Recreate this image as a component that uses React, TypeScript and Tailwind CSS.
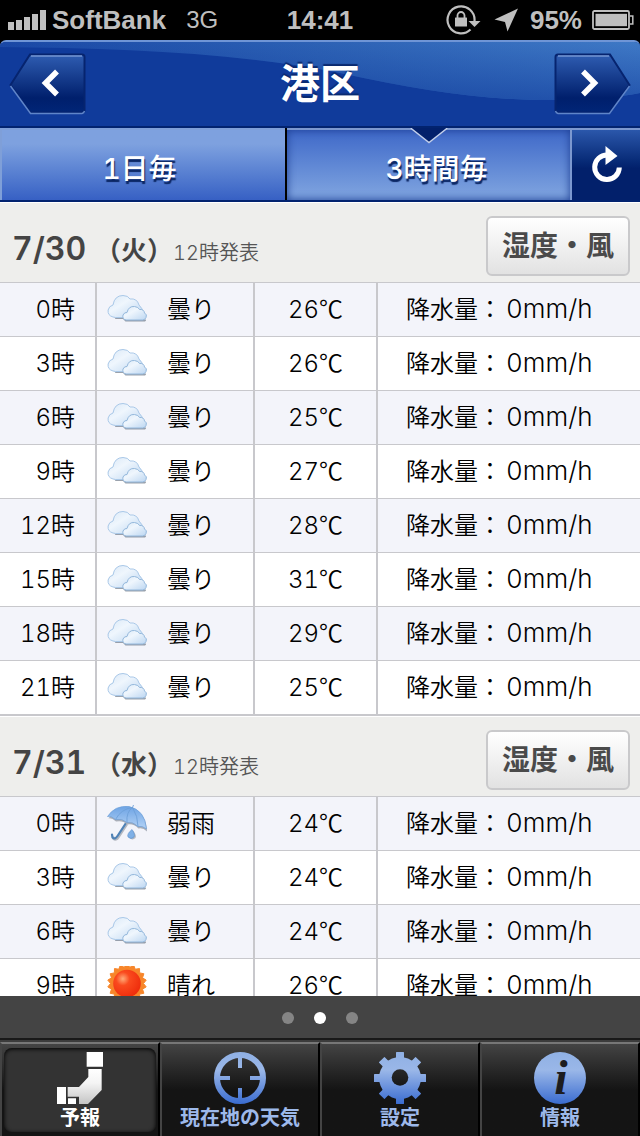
import React, { useState } from 'react';

type Weather = 'cloudy' | 'rain' | 'sunny';

interface Forecast {
  hour: number;
  weather: Weather;
  temp: number;
  rain: number;
}

interface Day {
  date: string;
  weekday: string;
  announced: string;
  rows: Forecast[];
}

const LABELS: Record<Weather, string> = { cloudy: '曇り', rain: '弱雨', sunny: '晴れ' };

const DAYS: Day[] = [
  {
    date: '7/30',
    weekday: '火',
    announced: '12時発表',
    rows: [
      { hour: 0, weather: 'cloudy', temp: 26, rain: 0 },
      { hour: 3, weather: 'cloudy', temp: 26, rain: 0 },
      { hour: 6, weather: 'cloudy', temp: 25, rain: 0 },
      { hour: 9, weather: 'cloudy', temp: 27, rain: 0 },
      { hour: 12, weather: 'cloudy', temp: 28, rain: 0 },
      { hour: 15, weather: 'cloudy', temp: 31, rain: 0 },
      { hour: 18, weather: 'cloudy', temp: 29, rain: 0 },
      { hour: 21, weather: 'cloudy', temp: 25, rain: 0 },
    ],
  },
  {
    date: '7/31',
    weekday: '水',
    announced: '12時発表',
    rows: [
      { hour: 0, weather: 'rain', temp: 24, rain: 0 },
      { hour: 3, weather: 'cloudy', temp: 24, rain: 0 },
      { hour: 6, weather: 'cloudy', temp: 24, rain: 0 },
      { hour: 9, weather: 'sunny', temp: 26, rain: 0 },
    ],
  },
];

const SUN_POINTS = Array.from({ length: 36 }, (_, i) => {
  const r = i % 2 === 0 ? 19.5 : 16.5;
  const a = (i * Math.PI) / 18 - Math.PI / 2;
  return `${(20 + r * Math.cos(a)).toFixed(2)},${(17.5 + r * Math.sin(a)).toFixed(2)}`;
}).join(' ');

const WeatherIcon: React.FC<{ weather: Weather }> = ({ weather }) => {
  if (weather === 'rain') {
    return (
      <svg className="h-10 w-10 shrink-0" viewBox="0 0 40 40" aria-hidden="true">
        <path d="M19 19 L10.500 32 Q8 36 5.500 33.500 L5 31.500" transform="translate(1 1)" fill="none" stroke="#b4b8c0" strokeWidth="2.500" />
        <path d="M19 19 L10.500 32 Q8 36 5.500 33.500 L5 30.500" fill="none" stroke="#4f82b6" strokeWidth="2.200" strokeLinecap="round" />
        <path d="M1 13.500 Q9 2 22 3.500 Q39 7 39.500 26.500 Q35.500 22.500 31 23.500 Q26 18.500 20 19.500 Q15 15 8.500 16.500 Q4 12.500 1 13.500Z" transform="translate(.5 1)" fill="#a9aeb8" />
        <path d="M0.500 12.500 Q8 1 22 2.500 Q38 6 39.500 25 Q35.500 21.500 31 22.500 Q26 17.500 20 18.500 Q15 14 8.500 15.500 Q4 11.500 0.500 12.500Z" fill="url(#umbrella)" stroke="#6d9fd8" strokeWidth=".7" />
        <path d="M25.500 3.500 Q14 5 8.500 15.500 M25.500 3.500 Q19 8 20 18.500 M25.500 3.500 Q31 12 31 22.500 M25.500 3.500 L26.500 1" fill="none" stroke="#6d9fd8" strokeWidth=".9" />
        <path d="M25 26 Q20 30.500 21.500 33 Q24 36.500 27.500 33.500 Q29 31 25 26Z" transform="translate(1 .6)" fill="#b4b8c0" />
        <path d="M25 25.500 Q19.500 30 21 33 Q24 36 27 33 Q28.500 30.500 25 25.500Z" fill="#7fb0e6" stroke="#5c92cf" strokeWidth=".6" />
      </svg>
    );
  }
  if (weather === 'sunny') {
    return (
      <svg className="h-10 w-10 shrink-0" viewBox="0 0 40 40" aria-hidden="true">
        <polygon points={SUN_POINTS} fill="#f7862a" stroke="#f7862a" strokeLinejoin="round" />
        <circle cx="20" cy="17.500" r="13.800" fill="url(#sun)" />
      </svg>
    );
  }
  return (
    <svg className="h-10 w-10 shrink-0" viewBox="0 0 40 40" aria-hidden="true">
      <g transform="translate(.5 -1.500)">
        <path d="M7 29 H17 L19 31 H38.500 Q39 32 37.500 33 H18 L15.500 30.500 H8Z" fill="#6f7a8a" opacity=".7" />
        <path d="M5.500 28.500 Q0 27 .6 21.500 Q1.500 17.500 5.500 16.500 Q7 7 15.500 7 Q20.500 7 22.500 10.500 Q29.500 9.500 31.500 16.500 Q36 20 34.500 25 Q33 29 29 29 H8Z" fill="url(#cloud)" stroke="#a9c8e8" />
        <path d="M18.500 31.500 Q14.500 30.500 15.500 26.500 Q17 23.500 19.500 24 Q21 17.500 27 18 Q31 18.500 32 21 Q36.500 20.500 37 24.500 Q40 26 38.500 29 Q37.500 31.500 35 31.500Z" fill="url(#cloud)" stroke="#94b8dc" />
      </g>
    </svg>
  );
};

// gradients shared by the weather and tab icons
const IconDefs = () => (
  <svg className="absolute h-0 w-0" aria-hidden="true">
    <defs>
      <linearGradient id="cloud" x1="0" y1="0" x2="1" y2="1">
        <stop offset="0" stopColor="#d9e8f7" />
        <stop offset=".4" stopColor="#eff6fd" />
        <stop offset="1" stopColor="#bcd6f1" />
      </linearGradient>
      <linearGradient id="umbrella" x1="0" y1="0" x2="0" y2="1">
        <stop offset="0" stopColor="#6da3e4" />
        <stop offset="1" stopColor="#b4d3f6" />
      </linearGradient>
      <radialGradient id="sun" cx=".35" cy=".33" r=".7">
        <stop offset="0" stopColor="#ffab78" />
        <stop offset=".35" stopColor="#fa4a1e" />
        <stop offset="1" stopColor="#ee2d0c" />
      </radialGradient>
      <linearGradient id="tabBlue" gradientUnits="userSpaceOnUse" x1="0" y1="0" x2="0" y2="52">
        <stop offset="0" stopColor="#8fb0e4" />
        <stop offset=".35" stopColor="#9ab7e8" />
        <stop offset="1" stopColor="#3a6cd0" />
      </linearGradient>
      <linearGradient id="tabWhite" x1="0" y1="0" x2="0" y2="1">
        <stop offset="0" stopColor="#ffffff" />
        <stop offset=".4" stopColor="#f4f4f4" />
        <stop offset="1" stopColor="#c4c4c4" />
      </linearGradient>
      <linearGradient id="arrowButton" x1="0" y1="0" x2="0" y2="1">
        <stop offset="0" stopColor="#2f5db2" />
        <stop offset=".75" stopColor="#001f6c" />
        <stop offset="1" stopColor="#012577" />
      </linearGradient>
    </defs>
  </svg>
);

const StatusBar = () => (
  <div className="flex h-10 shrink-0 items-center bg-black px-2 font-['Liberation_Sans',sans-serif] text-[26px] font-bold text-[#bfbfbf]">
    <div className="flex flex-1 items-center">
      <svg className="mr-1.5 h-5 w-[38px]" viewBox="0 0 38 20" fill="#bfbfbf" aria-hidden="true">
        <path d="M0 12h6v8H0zM8 10h6v10H8zM16 7h6v13h-6zM24 4h6v16h-6zM32 0h6v20h-6z" />
      </svg>
      <span>SoftBank</span>
      <span className="ml-5 text-2xl font-normal">3G</span>
    </div>
    <span>14:41</span>
    <div className="flex flex-1 items-center justify-end">
      <svg className="h-8 w-9" viewBox="0 0 36 32" fill="none" stroke="#bfbfbf" strokeWidth="2.200" aria-hidden="true">
        <path d="M24.500 25.500 A13.500 13.500 0 1 1 28.500 17" />
        <path d="M22.500 17h12l-6 6z" fill="#bfbfbf" stroke="none" />
        <rect x="9" y="13.500" width="12" height="9" rx=".5" fill="#bfbfbf" stroke="none" />
        <path d="M11.500 14v-2.500a3.500 3.500 0 0 1 7 0V14" strokeWidth="1.800" />
      </svg>
      <svg className="ml-3 h-6 w-6" viewBox="0 0 24 24" fill="#bfbfbf" aria-hidden="true">
        <path d="M24 0.500 L13.500 23.500 L11 14 L0.500 11.500Z" />
      </svg>
      <span className="ml-3">95%</span>
      <svg className="-mr-0.5 ml-2.5 h-5 w-[42px]" viewBox="0 0 42 20" aria-hidden="true">
        <rect x="1" y="1" width="36" height="18" rx="1.500" fill="none" stroke="#bfbfbf" strokeWidth="1.800" />
        <rect x="3.500" y="3.800" width="31.500" height="12.400" fill="#bfbfbf" />
        <path d="M38 6h2.800v8H38" fill="none" stroke="#bfbfbf" strokeWidth="1.500" />
      </svg>
    </div>
  </div>
);

const ArrowButton: React.FC<{ side: 'prev' | 'next' }> = ({ side }) => (
  <button className="relative h-[62px] w-[78px]" aria-label={side === 'prev' ? '前へ' : '次へ'}>
    <svg className="h-full w-full" viewBox="0 0 78 62" aria-hidden="true">
      <g transform={side === 'next' ? 'translate(78 0) scale(-1 1)' : undefined}>
        <path d="M2.500 32 L22 1.500 H74 Q76.500 1.500 76.500 4 V57 Q76.500 59.500 74 59.500 H22.500Z" fill="url(#arrowButton)" stroke="#06246f" strokeWidth="2" />
        <path d="M23 3 H74" stroke="#7596d2" strokeWidth="1.500" />
        <path d="M2.500 33 L22.500 60.500 H74 Q76 60 76.500 58" fill="none" stroke="#5f85c9" strokeWidth="1.500" />
        <path d="M49 18.500 L37.500 30 L49 41.500" fill="none" stroke="#fff" strokeWidth="5.500" />
      </g>
    </svg>
  </button>
);

const Header = () => (
  <header className="relative flex h-[88px] shrink-0 items-center justify-between overflow-hidden rounded-t-md border-t-2 border-b-2 border-t-[#6f95d6] border-b-[#02236f] bg-[#103b9b] px-2">
    <svg className="absolute inset-0 h-full w-full" viewBox="0 0 640 84" preserveAspectRatio="none" aria-hidden="true">
      <defs>
        <linearGradient id="gloss" x1="0" y1="0" x2="1" y2="0">
          <stop offset="0" stopColor="#1a48a6" />
          <stop offset=".5" stopColor="#2d62b5" />
          <stop offset="1" stopColor="#3f79c6" />
        </linearGradient>
        <linearGradient id="glossFade" x1="0" y1="0" x2="0" y2="1">
          <stop offset="0" stopColor="#103b9b" stopOpacity="0" />
          <stop offset="1" stopColor="#103b9b" stopOpacity=".6" />
        </linearGradient>
      </defs>
      <path d="M0 5 C120 6 240 11 340 31 C420 48 480 58 550 58 C590 58 620 55 640 51 V0 H0Z" fill="url(#gloss)" />
      <path d="M0 5 C120 6 240 11 340 31 C420 48 480 58 550 58 C590 58 620 55 640 51 V0 H0Z" fill="url(#glossFade)" />
    </svg>
    <ArrowButton side="prev" />
    <h1 className="relative text-[40px] leading-none font-bold text-white [text-shadow:0_-2px_1px_#0a2a70]">港区</h1>
    <ArrowButton side="next" />
  </header>
);

const ViewTabs = () => (
  <div className="grid h-[74px] shrink-0 grid-cols-[1fr_2px_1fr_68px] border-b-2 border-[#02236f] bg-[#02206b] text-[28px] font-medium text-white">
    <button className="border-t-2 border-l-2 border-[#7f9fd8] bg-linear-to-b from-[#7ea1df] from-20% to-[#3760c4] pt-2 pr-2 [text-shadow:1px_3px_1px_#0b2663]">
      1日毎
    </button>
    <div className="bg-black" />
    <button className="relative border-t-2 border-r-2 border-[#7c98cf] bg-linear-to-b from-[#3f68c8] to-[#7ba0de] to-90% pt-2 pl-4 shadow-[inset_0_0_8px_#1d3f93] [text-shadow:1px_3px_1px_#0b2663]">
      <svg className="absolute -top-0.5 left-1/2 h-4 w-10 -translate-x-1/2" viewBox="0 0 40 16" aria-hidden="true">
        <path d="M1 0 L20 15 L39 0Z" fill="#02206b" />
        <path d="M1.500 0 L20 14.500 L38.500 0" fill="none" stroke="#c3d0ec" strokeWidth="1.500" />
      </svg>
      3時間毎
    </button>
    <button
      className="flex items-center justify-center border-t-2 border-[#7c98cf] bg-linear-to-b from-[#2b57ab] to-[#02206b] to-55%"
      aria-label="更新"
    >
      <svg className="h-10 w-9" viewBox="0 0 36 40" fill="none" aria-hidden="true">
        <path d="M19.500 10 A12.300 12.300 0 1 0 31.300 22.500" stroke="#fff" strokeWidth="5" />
        <path d="M17.500 1 L29.500 11 L17.500 20Z" fill="#fff" />
      </svg>
    </button>
  </div>
);

const DaySection: React.FC<{ day: Day }> = ({ day }) => (
  <section>
    <div className="flex items-center justify-between border-t border-b border-t-white border-b-[#c8c8cc] bg-[#eeeeec] pt-[13px] pr-2.5 pb-1.5 pl-3">
      <h2 className="flex items-baseline pt-1.5 text-[#444]">
        <span className="w-[83px] text-[32px] font-semibold">{day.date}</span>
        <span className="text-[26px] font-bold">（{day.weekday}）</span>
        <span className="text-xl font-[350] text-[#555]">{day.announced}</span>
      </h2>
      <button className="h-[60px] rounded-md border-2 border-[#c9c9cb] bg-linear-to-b from-white to-[#e2e2e2] px-3.5 text-[28px] leading-none font-bold text-[#4a4a4a]">
        湿度・風
      </button>
    </div>
    <table className="w-full table-fixed border-separate border-spacing-0 text-2xl font-[350] text-black">
      <colgroup>
        <col className="w-[97px]" />
        <col className="w-[158px]" />
        <col className="w-[123px]" />
        <col />
      </colgroup>
      <tbody className="[&>tr:last-child>*]:h-[55px] [&>tr:last-child>*]:border-b-2">
        {day.rows.map((row) => (
          <tr key={row.hour} className="bg-white odd:bg-[#f3f4fa]">
            <th scope="row" className="h-[54px] border-r-2 border-b border-[#c8c8cc] p-0 pr-5 text-right font-[350]">
              {row.hour}時
            </th>
            <td className="border-r-2 border-b border-[#c8c8cc] p-0 pl-2.5">
              <div className="flex items-center gap-5">
                <WeatherIcon weather={row.weather} />
                {LABELS[row.weather]}
              </div>
            </td>
            <td className="border-r-2 border-b border-[#c8c8cc] p-0 text-center">
              {row.temp}
              <span className="font-['Noto_Sans_CJK_JP',sans-serif] leading-none">℃</span>
            </td>
            <td className="border-b border-[#c8c8cc] p-0 pl-7">
              降水量：<span className="ml-1 text-[26px] leading-none">{row.rain}mm/h</span>
            </td>
          </tr>
        ))}
      </tbody>
    </table>
  </section>
);

const ForecastIcon = () => (
  <svg className="h-[52px] w-[46px]" viewBox="168 336 138 156" aria-hidden="true">
    <path d="M257 336h49v44h-49zM168 441h27v51h-27zM201 475h24v17h-24z" fill="#fff" />
    <path d="M262 387h40v63l-41 42h-27v-22h-34v-29h34l28-30z" fill="url(#tabWhite)" />
  </svg>
);

const LocationIcon = () => (
  <svg className="h-[52px] w-[52px]" viewBox="0 0 52 52" fill="none" stroke="url(#tabBlue)" aria-hidden="true">
    <circle cx="26" cy="26" r="23" strokeWidth="6" />
    <path d="M24 5h4v11h-4zM24 36h4v11h-4zM5 24h11v4H5zM36 24h11v4H36z" fill="url(#tabBlue)" stroke="none" />
  </svg>
);

const GearIcon = () => (
  <svg className="h-[52px] w-[52px]" viewBox="0 0 52 52" aria-hidden="true">
    <mask id="gearMask">
      <g fill="#fff">
        <circle cx="26" cy="26" r="21" />
        {[0, 45, 90, 135].map((angle) => (
          <rect key={angle} x="22" y="0" width="8" height="52" rx=".5" transform={`rotate(${angle} 26 26)`} />
        ))}
      </g>
      <circle cx="26" cy="25.500" r="8.300" fill="#000" />
    </mask>
    <rect width="52" height="52" fill="url(#tabBlue)" mask="url(#gearMask)" />
  </svg>
);

const InfoIcon = () => (
  <svg className="h-[52px] w-[52px]" viewBox="0 0 52 52" aria-hidden="true">
    <circle cx="26" cy="26" r="26" fill="url(#tabBlue)" />
    <text x="27" y="42" textAnchor="middle" fontFamily="Liberation Serif, serif" fontSize="48" fontWeight="700" fontStyle="italic" fill="#1d1d1f">
      i
    </text>
  </svg>
);

const TABS = [
  { label: '予報', Icon: ForecastIcon },
  { label: '現在地の天気', Icon: LocationIcon },
  { label: '設定', Icon: GearIcon },
  { label: '情報', Icon: InfoIcon },
];

const TabBar = () => {
  const [active, setActive] = useState(0);

  return (
    <nav className="flex shrink-0 border-t-2 border-[#191919] bg-[#3c3c3c] pt-0.5">
      {TABS.map(({ label, Icon }, index) => (
        <button
          key={label}
          onClick={() => setActive(index)}
          className="h-[94px] flex-1 border-t-2 border-r-2 border-l-2 border-t-[#777] border-r-black border-l-[#444] bg-linear-to-b from-[#444] to-[#141414] to-50% pt-1 pb-1"
        >
          <span
            className={`mx-0.5 flex h-full flex-col items-center rounded-lg pt-1 text-xl leading-7 font-bold ${
              index === active ? 'bg-[#333] text-white shadow-[inset_0_1px_4px_#000]' : 'text-[#9db9ea]'
            }`}
          >
            <Icon />
            <span className="whitespace-nowrap">{label}</span>
          </span>
        </button>
      ))}
    </nav>
  );
};

const App: React.FC = () => (
  <div
    lang="ja"
    className="flex h-screen flex-col overflow-hidden bg-black font-['Inter','Noto_Sans_CJK_JP',sans-serif] tabular-nums"
  >
    <IconDefs />
    <StatusBar />
    <Header />
    <ViewTabs />
    <main className="min-h-0 flex-1 overflow-y-auto bg-white [scrollbar-width:none]">
      {DAYS.map((day) => (
        <DaySection key={day.date} day={day} />
      ))}
    </main>
    <div className="flex h-[42px] shrink-0 items-center justify-center gap-5 bg-[#444] pt-0.5">
      <span className="h-3 w-3 rounded-full bg-[#858585]" />
      <span className="h-3 w-3 rounded-full bg-white" />
      <span className="h-3 w-3 rounded-full bg-[#858585]" />
    </div>
    <TabBar />
  </div>
);

export default App;
